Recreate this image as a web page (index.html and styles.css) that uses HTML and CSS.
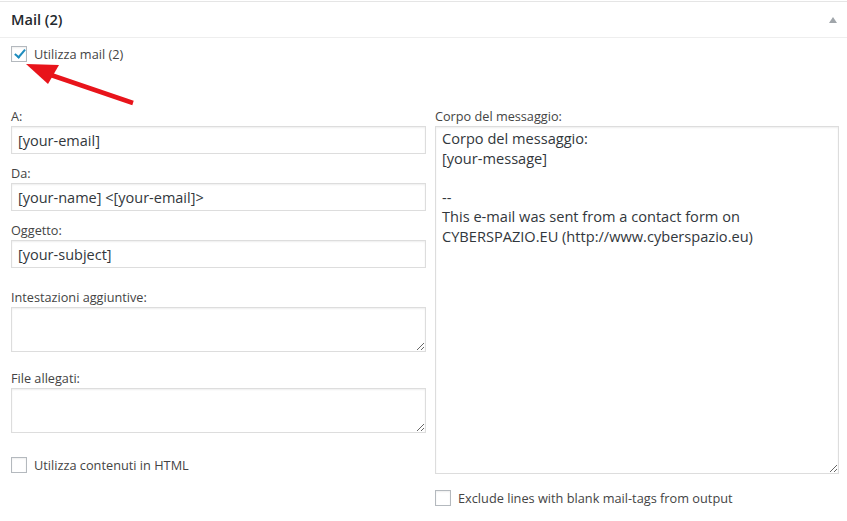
FILE: index.html
```html
<!DOCTYPE html>
<html lang="it">
<head>
<meta charset="utf-8">
<title>Mail (2)</title>
<link rel="stylesheet" href="styles.css">
</head>
<body>
<div class="postbox">
  <div class="hndle">
    <h3 class="title">Mail (2)</h3>
    <span class="toggle"></span>
  </div>
  <div class="inside">
    <label class="check-row top-check">
      <input type="checkbox" class="cb" checked>
      <span>Utilizza mail (2)</span>
    </label>

    <div class="fields">
      <div class="col col-left">
        <label class="fld-label" for="to">A:</label>
        <input id="to" class="txt" type="text" value="[your-email]">

        <label class="fld-label" for="from">Da:</label>
        <input id="from" class="txt" type="text" value="[your-name] <[your-email]>">

        <label class="fld-label" for="subj">Oggetto:</label>
        <input id="subj" class="txt" type="text" value="[your-subject]">

        <label class="fld-label gap-big" for="hdr">Intestazioni aggiuntive:</label>
        <textarea id="hdr" class="area small"></textarea>

        <label class="fld-label gap-mid" for="att">File allegati:</label>
        <textarea id="att" class="area small"></textarea>

        <label class="check-row html-check">
          <input type="checkbox" class="cb">
          <span>Utilizza contenuti in HTML</span>
        </label>
      </div>

      <div class="col col-right">
        <label class="fld-label" for="body">Corpo del messaggio:</label>
        <textarea id="body" class="area big">Corpo del messaggio:
[your-message]

--
This e-mail was sent from a contact form on CYBERSPAZIO.EU (http://www.cyberspazio.eu)</textarea>
        <label class="check-row excl-check">
          <input type="checkbox" class="cb">
          <span>Exclude lines with blank mail-tags from output</span>
        </label>
      </div>
    </div>
  </div>

  <svg class="arrow" width="140" height="110" viewBox="0 0 140 110">
    <line x1="133" y1="101" x2="48" y2="72" stroke="#e8141b" stroke-width="4.5" stroke-linecap="butt"/>
    <polygon points="26,62 59,63 48,82" fill="#e8141b"/>
  </svg>
</div>
</body>
</html>
```

FILE: styles.css
```css
html, body {
  margin: 0;
  padding: 0;
  background: #fff;
}

body {
  font-family: "Open Sans", "Liberation Sans", sans-serif;
  color: #444;
  font-size: 12.7px;
}

.postbox {
  position: relative;
  width: 847px;
  height: 521px;
  margin-top: 1px;
  border-top: 1px solid #e5e5e5;
  box-sizing: border-box;
}

.hndle {
  height: 35px;
  border-bottom: 1px solid #eee;
  display: flex;
  align-items: center;
  justify-content: space-between;
  padding: 0 10px 0 11px;
}

.title {
  margin: 0;
  font-size: 14.6px;
  font-weight: 600;
  color: #23282d;
  line-height: 1.4;
}

.toggle {
  width: 0;
  height: 0;
  border-left: 4px solid transparent;
  border-right: 4px solid transparent;
  border-bottom: 6px solid #a0a5aa;
}

.inside {
  padding: 8px 8px 0 11px;
}

.check-row {
  display: flex;
  align-items: center;
  gap: 7px;
  font-size: 12.75px;
  color: #444;
  line-height: 16px;
}

.cb {
  appearance: none;
  -webkit-appearance: none;
  margin: 0;
  width: 16px;
  height: 16px;
  border: 1px solid #b4b9be;
  box-sizing: border-box;
  background: #fff;
  box-shadow: inset 0 1px 2px rgba(0,0,0,0.07);
  position: relative;
  flex: none;
}

.cb:checked::after {
  content: "";
  position: absolute;
  left: 5px;
  top: 0px;
  width: 4px;
  height: 9px;
  border-right: 2.5px solid #1e8cbe;
  border-bottom: 2.5px solid #1e8cbe;
  transform: rotate(40deg);
}

.top-check {
  margin-bottom: 45px;
}

.fields {
  display: grid;
  grid-template-columns: 415px 404px;
  column-gap: 9px;
  align-items: start;
}

.col {
  display: flex;
  flex-direction: column;
}

.fld-label {
  display: block;
  font-size: 12.7px;
  line-height: 19px;
  color: #444;
}

.txt {
  display: block;
  box-sizing: border-box;
  width: 100%;
  height: 28px;
  margin: 0 0 10px 0;
  padding: 3px 6px;
  border: 1px solid #ddd;
  box-shadow: inset 0 1px 2px rgba(0,0,0,0.07);
  font-family: "Open Sans", "Liberation Sans", sans-serif;
  font-size: 14.5px;
  color: #32373c;
  background: #fff;
  outline: none;
}

.area {
  display: block;
  box-sizing: border-box;
  width: 100%;
  margin: 0;
  padding: 2px 6px;
  border: 1px solid #ddd;
  box-shadow: inset 0 1px 2px rgba(0,0,0,0.07);
  font-family: "Open Sans", "Liberation Sans", sans-serif;
  font-size: 14.6px;
  line-height: 19.5px;
  color: #32373c;
  background: #fff;
  outline: none;
  resize: both;
}

.area.small {
  height: 45px;
}

.area.big {
  height: 348px;
}

.gap-big {
  margin-top: 10px;
}

.gap-mid {
  margin-top: 17px;
}

.html-check {
  margin-top: 24px;
}

.excl-check {
  margin-top: 16px;
}

.arrow {
  position: absolute;
  left: 0;
  top: 0;
  pointer-events: none;
}
```
